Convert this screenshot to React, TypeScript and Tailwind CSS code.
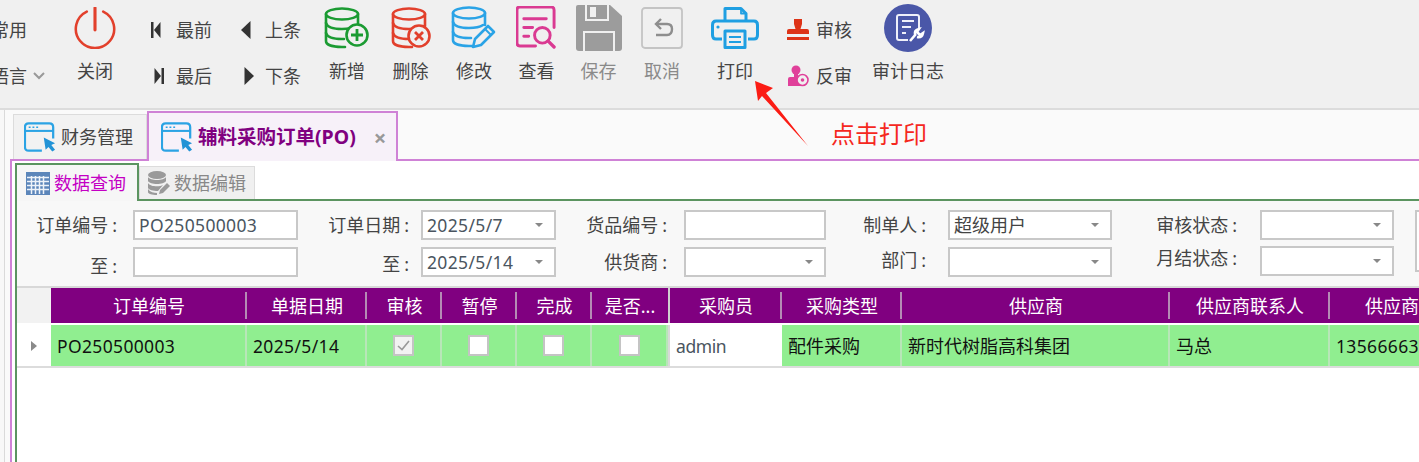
import type { ReactNode } from 'react';

const Power = () => (
  <svg width="42" height="42" viewBox="0 0 46 46" fill="none" stroke="#e2402c" strokeWidth="2.8" strokeLinecap="round">
    <path d="M14 5 A21 21 0 1 0 32 5" />
    <path d="M23 1 V25" strokeWidth="3.4" />
  </svg>
);

const DbBody = ({ color }: { color: string }) => (
  <g fill="none" stroke={color} strokeWidth="2.6" strokeLinecap="round">
    <ellipse cx="18" cy="8" rx="16" ry="5.5" />
    <path d="M2 8 V35 C2 39 9 41 18 41 H21" />
    <path d="M34 8 V20" />
    <path d="M2 17 C3 21 10 23 18 23 C24 23 29 22 32 20" />
    <path d="M2 27 C3 31 10 33 18 33 H20" />
  </g>
);

const DbAdd = () => (
  <svg width="46" height="44" viewBox="0 0 46 44">
    <DbBody color="#1b9b32" />
    <circle cx="33" cy="29" r="10.5" fill="#f0f0f0" stroke="#1b9b32" strokeWidth="2.6" />
    <path d="M33 23 V35 M27 29 H39" stroke="#1b9b32" strokeWidth="2.8" />
  </svg>
);

const DbDelete = () => (
  <svg width="40" height="44" viewBox="0 0 40 44">
    <DbBody color="#e2402c" />
    <circle cx="28" cy="30" r="10.5" fill="#f0f0f0" stroke="#e2402c" strokeWidth="2.6" />
    <path d="M24 26 L32 34 M32 26 L24 34" stroke="#e2402c" strokeWidth="2.8" />
  </svg>
);

const DbEdit = () => (
  <svg width="46" height="46" viewBox="0 0 46 46">
    <DbBody color="#2aa3e6" />
    <path d="M22 42 L24 34 L37 21 L43 27 L30 40 Z" fill="#f0f0f0" stroke="#2aa3e6" strokeWidth="2.6" strokeLinejoin="round" />
    <path d="M34 24 L40 30" stroke="#2aa3e6" strokeWidth="2" />
  </svg>
);

const ViewDoc = () => (
  <svg width="41" height="43" viewBox="0 0 42 44" fill="none" stroke="#da3a92" strokeWidth="3" strokeLinecap="round">
    <path d="M20 41 H4 Q1 41 1 38 V4 Q1 1 4 1 H36 Q39 1 39 4 V22" />
    <path d="M8 13 H31 M8 22 H17 M8 31 H13" />
    <circle cx="27" cy="30" r="8" />
    <path d="M33 36 L39 42" strokeWidth="3.4" />
  </svg>
);

const SaveDisk = () => (
  <svg width="46" height="46" viewBox="0 0 46 46">
    <path d="M2 0 H34 L46 11 V43 Q46 46 43 46 H3 Q0 46 0 43 V2 Q0 0 2 0 Z" fill="#9c9c9c" />
    <rect x="9" y="0" width="24" height="16" fill="#f0f0f0" />
    <rect x="11" y="0" width="20" height="14" fill="#9c9c9c" />
    <rect x="14" y="2" width="6" height="10" fill="#f0f0f0" />
    <rect x="7" y="26" width="32" height="20" fill="#f0f0f0" />
    <rect x="9" y="28" width="28" height="18" fill="#9c9c9c" />
  </svg>
);

const CancelBox = () => (
  <svg width="42" height="42" viewBox="0 0 42 42" fill="none">
    <rect x="1" y="1" width="40" height="40" rx="3" stroke="#c4c4c4" strokeWidth="1.8" />
    <path d="M15 17 H26 Q31 17 31 22 Q31 28 26 28 H15" stroke="#8e8e8e" strokeWidth="2.4" />
    <path d="M20 12 L15 17 L20 22" stroke="#8e8e8e" strokeWidth="2.4" />
  </svg>
);

const Printer = () => (
  <svg width="48" height="42" viewBox="0 0 48 42" fill="none" stroke="#1f9fe2" strokeWidth="3" strokeLinejoin="round">
    <path d="M14 14 V1.5 H30 L35 6.5 V14" />
    <path d="M30 1.5 V6.5 H35" strokeWidth="1.8" />
    <path d="M11 32 H5 Q1.5 32 1.5 28 V18 Q1.5 14 5 14 H43 Q46.5 14 46.5 18 V28 Q46.5 32 43 32 H37" />
    <path d="M14 24 H34 V40.5 H14 Z" />
    <path d="M18 30 H30 M18 35 H30" strokeWidth="2" />
    <circle cx="7" cy="20" r="1.6" fill="#1f9fe2" stroke="none" />
  </svg>
);

const Stamp = () => (
  <svg width="22" height="22" viewBox="0 0 22 22" fill="#dd3317">
    <path d="M7 0 H15 V5 L13.5 10 H20 Q22 10 22 12 V15 H0 V12 Q0 10 2 10 H8.5 L7 5 Z" />
    <rect x="0" y="18" width="22" height="3" />
  </svg>
);

const UnStamp = () => (
  <svg width="22" height="22" viewBox="0 0 22 22">
    <circle cx="9" cy="5" r="4.5" fill="#e0409a" />
    <path d="M7 8 H11 V12 H15 V21 H1 V14 Q1 12 3 12 H7 Z" fill="#e0409a" />
    <circle cx="15.5" cy="15" r="5.5" fill="#f0f0f0" stroke="#e0409a" strokeWidth="1.6" />
    <circle cx="15.5" cy="15" r="1.8" fill="#e0409a" />
  </svg>
);

const AuditLog = () => (
  <svg width="48" height="48" viewBox="0 0 48 48" fill="none">
    <circle cx="24" cy="24" r="24" fill="#4a57a8" />
    <path d="M24 36 H15 Q13 36 13 34 V13 Q13 11 15 11 H33 Q35 11 35 13 V24" stroke="#eef0fa" strokeWidth="2" />
    <path d="M18 17 H30 M18 23 H27 M18 29 H22" stroke="#eef0fa" strokeWidth="2" />
    <path d="M26 37 L32 30 M31 31 Q30 26 35 25 L33 28 L36 31 L39 29 Q38 34 33 33" stroke="#ffffff" strokeWidth="2.6" />
  </svg>
);

const WindowCursor = () => (
  <svg width="32" height="31" viewBox="0 0 34 32" fill="none">
    <path d="M19 30 H5 Q1 30 1 26 V5 Q1 1 5 1 H27 Q31 1 31 5 V17" stroke="#2ba3e4" strokeWidth="2.4" />
    <path d="M1 9 H31" stroke="#2ba3e4" strokeWidth="2.2" />
    <path d="M5 5 H7 M9 5 H11 M13 5 H15" stroke="#2ba3e4" strokeWidth="1.6" />
    <path d="M21 16 L33 22 L29 24 L33 29 L30 31 L26 26 L23 29 Z" fill="#2293d6" />
  </svg>
);

const GridIcon = () => (
  <svg width="24" height="23" viewBox="0 0 24 23">
    <rect width="24" height="23" fill="#5c86ba" />
    <path d="M1 5.5 H23 M1 9.5 H23 M1 13.5 H23 M1 17.5 H23 M5.5 4 V22 M9.5 4 V22 M13.5 4 V22 M17.5 4 V22" stroke="#eef3f9" strokeWidth="1.5" />
  </svg>
);

const DbGrey = () => (
  <svg width="22" height="24" viewBox="0 0 22 24" fill="#9a9a9a">
    <ellipse cx="9" cy="4" rx="9" ry="4" />
    <path d="M0 6 C2 10 16 10 18 6 V10 C16 14 2 14 0 10 Z" />
    <path d="M0 12 C2 16 12 16 15 14 L10 20 C5 20 1 19 0 17 Z" />
    <path d="M0 18 C2 21 6 22 9 22 L9 24 C4 24 0 23 0 21 Z" />
    <path d="M11 23 L12 19 L19 12 L22 15 L15 22 Z" />
  </svg>
);

const BigButton = ({ w, label, dim, children }: { w: string; label: string; dim?: boolean; children: ReactNode }) => (
  <div className={`${w} shrink-0 flex flex-col items-center`}>
    <div className="h-[55px] flex items-center justify-center">{children}</div>
    <div className={`h-[30px] pt-[1px] leading-[30px] whitespace-nowrap ${dim ? 'text-[#8a8a8a]' : 'text-[#444]'}`}>{label}</div>
  </div>
);

const SmallItem = ({ icon, iconBox, label }: { icon: ReactNode; iconBox: string; label: string }) => (
  <div className="flex items-center h-[46px]">
    <div className={`${iconBox} shrink-0 flex items-center`}>{icon}</div>
    <span className="whitespace-nowrap text-[#444]">{label}</span>
  </div>
);

const Tri = ({ dir, bar }: { dir: 'l' | 'r'; bar?: boolean }) => (
  <svg width="10" height="18" viewBox="0 0 10 18" fill="#333">
    {dir === 'l' ? <path d={bar ? 'M9.5 1 V17 L3 9 Z' : 'M9.5 0 V18 L0 9 Z'} /> : <path d={bar ? 'M0.5 1 V17 L7 9 Z' : 'M0.5 0 V18 L10 9 Z'} />}
    {bar && <rect x={dir === 'l' ? 0 : 7.5} y="1" width="2.5" height="16" />}
  </svg>
);

const Caret = () => <span className="w-0 h-0 border-x-[4px] border-x-transparent border-t-[4px] border-t-[#888]" />;

const Box = ({ w, text, caret, latin }: { w: string; text?: string; caret?: boolean; latin?: boolean }) => (
  <div className={`${w} h-full shrink-0 bg-white border-2 border-[#c8c8c8] flex items-center pl-[4px] pr-[11px] justify-between`}>
    <span className={`whitespace-nowrap ${latin ? 'text-[17.5px] text-[#4a5560] tracking-[0.35px]' : 'text-[#444]'}`}>{text}</span>
    {caret && <Caret />}
  </div>
);

const Label = ({ w, text, nudge = '' }: { w: string; text: string; nudge?: string }) => (
  <div className={`${w} ${nudge} shrink-0 text-right whitespace-nowrap text-[#444]`}>
    {text}
    <span className="ml-[4px]">:</span>
  </div>
);

const columns = [
  { w: 'w-[196px]', title: '订单编号' },
  { w: 'w-[120px]', title: '单据日期' },
  { w: 'w-[75px]', title: '审核' },
  { w: 'w-[75px]', title: '暂停' },
  { w: 'w-[75px]', title: '完成' },
  { w: 'w-[76px]', title: '是否...', last: true },
  { w: 'w-[112px]', title: '采购员' },
  { w: 'w-[120px]', title: '采购类型' },
  { w: 'w-[268px]', title: '供应商' },
  { w: 'w-[160px]', title: '供应商联系人' },
  { w: 'w-[160px]', title: '供应商电话' },
];

const Check = ({ checked }: { checked?: boolean }) => (
  <span className={`w-[21px] h-[21px] border-2 border-[#c4c4c4] flex items-center justify-center ${checked ? 'bg-[#f2f2f2]' : 'bg-white'}`}>
    {checked && (
      <svg width="13" height="11" viewBox="0 0 13 11" fill="none" stroke="#999" strokeWidth="1.6">
        <path d="M1 6 L5 9.5 L12 1" />
      </svg>
    )}
  </span>
);

const Cell = ({ w, children, center, white }: { w: string; children: ReactNode; center?: boolean; white?: boolean }) => (
  <div className={`${w} shrink-0 h-full flex items-center whitespace-nowrap border-r-2 ${white ? 'bg-white border-white text-[#4a5560]' : 'bg-[#90ee90] border-[#b8e6b8] text-[#111]'} ${center ? 'justify-center' : 'pl-[6px]'}`}>
    {children}
  </div>
);

export default function App() {
  return (
    <div className="relative w-[1419px] h-[462px] overflow-hidden flex flex-col bg-white text-[18px] leading-[24px] font-['Noto_Sans','Noto_Sans_CJK_SC',sans-serif]">
      {/* ribbon */}
      <div className="h-[110px] shrink-0 flex bg-[#f0f0f0] border-b-2 border-[#dcdcdc]">
        <div className="w-[70px] shrink-0 overflow-hidden flex flex-col pt-[7px] text-[#444]">
          <div className="h-[46px] flex items-center -ml-[9px] whitespace-nowrap">常用</div>
          <div className="h-[46px] flex items-center -ml-[9px] whitespace-nowrap gap-[6px]">
            语言
            <svg width="12" height="8" viewBox="0 0 12 8" fill="none" stroke="#999" strokeWidth="2">
              <path d="M1 1 L6 6 L11 1" />
            </svg>
          </div>
        </div>
        <BigButton w="w-[50px]" label="关闭"><Power /></BigButton>
        <div className="ml-[30px] w-[62px] shrink-0 flex flex-col pt-[7px]">
          <SmallItem iconBox="w-[26px] pl-[1px]" icon={<Tri dir="l" bar />} label="最前" />
          <SmallItem iconBox="w-[26px] pl-[4px]" icon={<Tri dir="r" bar />} label="最后" />
        </div>
        <div className="ml-[28px] w-[62px] shrink-0 flex flex-col pt-[7px]">
          <SmallItem iconBox="w-[25px] pl-[1px]" icon={<Tri dir="l" />} label="上条" />
          <SmallItem iconBox="w-[25px] pl-[4px]" icon={<Tri dir="r" />} label="下条" />
        </div>
        <div className="ml-[13px] flex">
          <BigButton w="w-[64px]" label="新增"><DbAdd /></BigButton>
          <BigButton w="w-[63px]" label="删除"><DbDelete /></BigButton>
          <BigButton w="w-[64px]" label="修改"><DbEdit /></BigButton>
          <BigButton w="w-[61px]" label="查看"><ViewDoc /></BigButton>
          <BigButton w="w-[63px]" label="保存" dim><SaveDisk /></BigButton>
          <BigButton w="w-[64px]" label="取消" dim><CancelBox /></BigButton>
          <BigButton w="w-[82px]" label="打印"><Printer /></BigButton>
        </div>
        <div className="ml-[11px] w-[66px] shrink-0 flex flex-col pt-[7px]">
          <SmallItem iconBox="w-[29px]" icon={<Stamp />} label="审核" />
          <SmallItem iconBox="w-[29px]" icon={<UnStamp />} label="反审" />
        </div>
        <div className="ml-[20px]">
          <BigButton w="w-[70px]" label="审计日志"><AuditLog /></BigButton>
        </div>
      </div>

      <div className="flex-1 flex min-h-0">
        {/* collapsed side panel */}
        <div className="w-[5px] shrink-0 bg-[#f8f8f8] border-r border-[#dadada]" />

        <div className="flex-1 min-w-0 flex flex-col bg-[#fafafa]">
          {/* document tabs */}
          <div className="h-[49px] shrink-0 flex items-end pl-[8px]">
            <div className="w-[134px] h-[45px] flex items-center gap-[5px] pl-[10px] bg-[#f2f2f2] border border-b-0 border-[#dcdcdc] text-[#444] whitespace-nowrap">
              <WindowCursor />
              财务管理
            </div>
            <div className="relative z-10 -mb-[2px] w-[251px] h-[50px] flex items-center pl-[12px] bg-[#f7f1f9] border-2 border-b-0 border-[#cf82d6]">
              <WindowCursor />
              <span className="ml-[5px] text-[19.5px] font-bold text-[#800080] whitespace-nowrap">辅料采购订单(PO)</span>
              <span className="ml-[18px] text-[#999] text-[22px] font-bold">×</span>
            </div>
          </div>

          {/* document panel */}
          <div className="ml-[5px] flex-1 min-h-0 bg-white border-l-2 border-t-2 border-[#cf82d6] pl-[3px] pt-[2px] flex flex-col">
            <div className="h-[36px] shrink-0 flex items-end">
              <div className="relative z-10 -mb-[2px] w-[124px] h-[38px] flex items-center gap-[4px] pl-[9px] bg-[#f6f6f6] border-2 border-b-0 border-[#5b9460] text-[#c400c4] whitespace-nowrap">
                <GridIcon />
                数据查询
              </div>
              <div className="w-[116px] h-[33px] flex items-center gap-[4px] pl-[8px] bg-[#f0f0f0] border border-b-0 border-[#dcdcdc] text-[#888] whitespace-nowrap">
                <DbGrey />
                数据编辑
              </div>
            </div>
            <div className="flex-1 min-h-0 border-l-2 border-t-2 border-[#5b9460] flex flex-col">
              {/* filter form */}
              <div className="h-[85px] shrink-0 bg-[#f8f8f8] pt-[9px] flex flex-col gap-[7px]">
                <div className="h-[30px] flex items-center">
                  <Label w="w-[100px]" text="订单编号" />
                  <div className="ml-[16px] h-full flex"><Box w="w-[165px]" text="PO250500003" latin /></div>
                  <Label w="w-[111px]" text="订单日期" />
                  <div className="ml-[12px] h-full flex"><Box w="w-[135px]" text="2025/5/7" latin caret /></div>
                  <Label w="w-[111px]" text="货品编号" />
                  <div className="ml-[17px] h-full flex"><Box w="w-[142px]" /></div>
                  <Label w="w-[100px]" text="制单人" />
                  <div className="ml-[22px] h-full flex"><Box w="w-[164px]" text="超级用户" caret /></div>
                  <Label w="w-[125px]" text="审核状态" />
                  <div className="ml-[23px] h-full flex"><Box w="w-[134px]" caret /></div>
                  <div className="ml-[21px] w-[20px] h-[62px] self-start shrink-0 bg-white border-2 border-[#c8c8c8]" />
                </div>
                <div className="h-[30px] flex items-center">
                  <Label w="w-[100px]" text="至" nudge="pt-[8px]" />
                  <div className="ml-[16px] h-full flex"><Box w="w-[165px]" /></div>
                  <Label w="w-[111px]" text="至" nudge="pt-[4px]" />
                  <div className="ml-[12px] h-full flex"><Box w="w-[135px]" text="2025/5/14" latin caret /></div>
                  <Label w="w-[111px]" text="供货商" />
                  <div className="ml-[17px] h-full flex"><Box w="w-[142px]" caret /></div>
                  <Label w="w-[100px]" text="部门" nudge="pb-[4px]" />
                  <div className="ml-[22px] h-full flex"><Box w="w-[164px]" caret /></div>
                  <Label w="w-[125px]" text="月结状态" nudge="pb-[8px]" />
                  <div className="ml-[23px] h-full flex -mt-[3px]"><Box w="w-[134px]" caret /></div>
                </div>
              </div>

              {/* data grid */}
              <div className="flex-1 min-h-0 bg-white overflow-hidden">
                <div className="flex h-[37px] border-t-2 border-[#d8d8d8] w-max">
                  <div className="w-[34px] shrink-0 bg-[#f2f2f2]" />
                  <div className="flex bg-[#800080]">
                    {columns.map((c) => (
                      <div key={c.title} className="flex h-full">
                        <div className={`${c.w} shrink-0 h-full flex items-center justify-center relative text-white whitespace-nowrap`}>
                          {c.title}
                          {!c.last && <span className="absolute right-0 top-[4px] bottom-[4px] w-[2px] bg-[#b58bb5]" />}
                        </div>
                        {c.last && <div className="w-[2px] shrink-0 bg-[#cfcfcf]" />}
                      </div>
                    ))}
                  </div>
                </div>
                <div className="flex h-[45px] pt-[2px] w-max border-b-2 border-[#dcdcdc]">
                  <div className="w-[34px] shrink-0 flex items-center justify-center">
                    <span className="w-0 h-0 border-y-[5px] border-y-transparent border-l-[6px] border-l-[#8a8a8a]" />
                  </div>
                  <Cell w="w-[196px]"><span className="text-[17.5px] tracking-[0.35px]">PO250500003</span></Cell>
                  <Cell w="w-[120px]"><span className="text-[17.5px] tracking-[0.35px]">2025/5/14</span></Cell>
                  <Cell w="w-[75px]" center><Check checked /></Cell>
                  <Cell w="w-[75px]" center><Check /></Cell>
                  <Cell w="w-[75px]" center><Check /></Cell>
                  <Cell w="w-[76px]" center><Check /></Cell>
                  <div className="w-[2px] shrink-0 bg-[#d8d8d8]" />
                  <Cell w="w-[112px]" white><span className="text-[17.5px] tracking-[-0.4px]">admin</span></Cell>
                  <Cell w="w-[120px]">配件采购</Cell>
                  <Cell w="w-[268px]">新时代树脂高科集团</Cell>
                  <Cell w="w-[160px]">马总</Cell>
                  <Cell w="w-[160px]"><span className="text-[17.5px] tracking-[0.35px]">13566663</span></Cell>
                </div>
              </div>
            </div>
          </div>
        </div>
      </div>

      {/* annotation over the screenshot */}
      <svg className="absolute left-0 top-0 pointer-events-none" width="1419" height="462">
        <polygon points="755,81 773,88 766,93 808,146 762,96 758,101" fill="#fb1c14" />
      </svg>
      <div className="absolute left-[831px] top-[118px] text-[24px] leading-[32px] text-[#f5281e] whitespace-nowrap">点击打印</div>
    </div>
  );
}
